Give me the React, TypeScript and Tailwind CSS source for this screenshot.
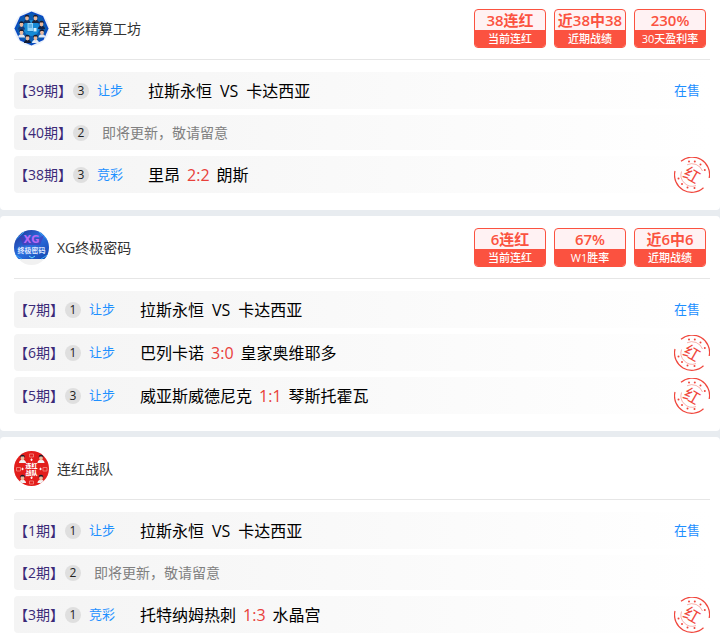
import type { ReactNode } from "react";

interface Badge {
  value: string;
  label: string;
}

interface Match {
  period: number;
  count: number;
  tag?: string;
  home?: string;
  away?: string;
  score?: string;
}

interface Expert {
  name: string;
  avatar: ReactNode;
  badges: Badge[];
  matches: Match[];
}

const Face = ({ x, y, suit }: { x: number; y: number; suit: string }) => (
  <g>
    <path d={`M${x - 3.6} ${y + 5}q.6 -3.2 3.6 -3.2t3.6 3.2z`} fill={suit} />
    <ellipse cx={x} cy={y} rx="1.9" ry="2.4" fill="#e9b99d" />
    <path d={`M${x - 2.2} ${y}q-.4 -3.2 2.2 -3.2t2.2 3.2l-.8 -1.4h-2.800z`} fill="#1b1a2a" />
  </g>
);

const WorkshopAvatar = () => (
  <svg viewBox="0 0 35 35" className="size-[35px] shrink-0 rounded-full" aria-hidden="true">
    <rect width="35" height="35" fill="#eaf2fb" />
    <path d="M17.5 0.5 29 5 34.5 17.5 29.5 29 17.5 34.5 6 29.5 0.5 17.5 6 5.5z" fill="#0a49c4" />
    <path d="M17.5 2 28 6.2 33 17.5 28.3 28 17.5 33 7 28.3 2 17.5 7 6.5z" fill="#0a5bb0" />
    <circle cx="17.5" cy="17" r="8" fill="#168bd6" />
    <Face x={13} y={7} suit="#12305e" />
    <Face x={21.5} y={7} suit="#1a2238" />
    <Face x={27.5} y={13} suit="#102246" />
    <Face x={7.5} y={13.5} suit="#183b78" />
    <Face x={7.5} y={21.5} suit="#dfe8f4" />
    <Face x={28} y={21.5} suit="#dfe8f4" />
    <Face x={13.5} y={27} suit="#101a35" />
    <Face x={21.5} y={27} suit="#e4ecf7" />
    <path d="M13.5 12h5.5v8h-5.500z" fill="#8fd4f8" />
    <path d="M14.5 14h3.5M14.5 16h3.5M13 20.500h9" stroke="#1577c2" strokeWidth=".8" />
    <path d="M19.500 17h3v3.500h-3z" fill="#d8f2ff" />
  </svg>
);

const CodeAvatar = () => (
  <svg viewBox="0 0 35 35" className="size-[35px] shrink-0 rounded-full" aria-hidden="true">
    <defs>
      <linearGradient id="code-bg" x1="0" y1="0" x2="1" y2="1">
        <stop offset="0" stopColor="#1d2f91" />
        <stop offset=".5" stopColor="#2b6fe0" />
        <stop offset="1" stopColor="#1545ae" />
      </linearGradient>
    </defs>
    <rect width="35" height="35" fill="#f1f1f1" />
    <rect width="35" height="29" fill="url(#code-bg)" />
    <path d="M0 11 10 2 7 0M35 11 25 2 28 0M0 24l8 5M35 24l-8 5" stroke="#36a6f4" fill="none" />
    <path d="M5 5l5 3h15l5-3-4 10H9z" fill="#4b34b5" opacity=".6" />
    <path d="M15 26l3 2 3-2" stroke="#69ddff" fill="none" />
    <text x="17.5" y="13" textAnchor="middle" fontSize="10" fontWeight="700" fontFamily="DejaVu Sans, sans-serif" fill="#b56af5">
      XG
    </text>
    <text x="17.5" y="23" textAnchor="middle" fontSize="7" fontWeight="700" fill="#dfe8ff">
      终极密码
    </text>
  </svg>
);

const TeamAvatar = () => (
  <svg viewBox="0 0 35 35" className="size-[35px] shrink-0 rounded-full" aria-hidden="true">
    <rect width="35" height="35" fill="#e21d1b" />
    <g fill="none" stroke="#f58a80" strokeWidth=".8">
      <path d="M15.500 3h4v3h-4zM15.500 30h4v3h-4zM2.500 16.500h4v3.500h-4zM29 16.500h4v3.500h-4z" />
    </g>
    <path
      d="M17.5 7.500v2.500M16.300 8.800h2.500M17.5 25.500v2.500M16.300 26.800h2.500M8.500 16.700v2.500M7.300 18h2.500M26.500 16.700v2.500M25.300 18h2.500"
      stroke="#fff"
      strokeWidth=".9"
    />
    <Face x={8.5} y={7} suit="#f3f3f3" />
    <Face x={27} y={7} suit="#f3f3f3" />
    <Face x={8.5} y={27} suit="#f3f3f3" />
    <Face x={27} y={27} suit="#f3f3f3" />
    <text x="17.5" y="17" textAnchor="middle" fontSize="6" fontWeight="900" fill="#fff">
      连红
    </text>
    <text x="17.5" y="23.5" textAnchor="middle" fontSize="6" fontWeight="900" fill="#fff">
      战队
    </text>
  </svg>
);

const RedStamp = () => (
  <svg viewBox="0 0 36 36" className="size-9 shrink-0" role="img" aria-label="红">
    <g fill="none" stroke="#f0463c">
      <path d="M7 4.300A17.300 17.300 0 0 1 35.200 21" strokeWidth="1.200" />
      <path d="M1 14A17.300 17.300 0 0 0 29.500 30.800" strokeWidth="1.200" />
      <path d="M13 7.800A11.300 11.300 0 0 1 28.500 14M7.500 14.500A11.300 11.300 0 0 0 22 28.600" strokeWidth=".6" opacity=".7" />
    </g>
    <g fill="#f0463c">
      <circle cx="15" cy="4.500" r="1" />
      <circle cx="20.800" cy="4.500" r="1" />
      <circle cx="26.500" cy="7.500" r="1" />
      <circle cx="30.800" cy="13" r="1" />
      <circle cx="4.500" cy="21.500" r="1" />
      <circle cx="8" cy="27" r="1" />
      <circle cx="13.500" cy="30.500" r="1" />
      <circle cx="20.500" cy="31" r="1" />
    </g>
    <text x="18" y="24" textAnchor="middle" fontSize="16" fill="#f0463c" transform="rotate(30 18 18)">
      红
    </text>
  </svg>
);

const experts: Expert[] = [
  {
    name: "足彩精算工坊",
    avatar: <WorkshopAvatar />,
    badges: [
      { value: "38连红", label: "当前连红" },
      { value: "近38中38", label: "近期战绩" },
      { value: "230%", label: "30天盈利率" },
    ],
    matches: [
      { period: 39, count: 3, tag: "让步", home: "拉斯永恒", away: "卡达西亚" },
      { period: 40, count: 2 },
      { period: 38, count: 3, tag: "竞彩", home: "里昂", away: "朗斯", score: "2:2" },
    ],
  },
  {
    name: "XG终极密码",
    avatar: <CodeAvatar />,
    badges: [
      { value: "6连红", label: "当前连红" },
      { value: "67%", label: "W1胜率" },
      { value: "近6中6", label: "近期战绩" },
    ],
    matches: [
      { period: 7, count: 1, tag: "让步", home: "拉斯永恒", away: "卡达西亚" },
      { period: 6, count: 1, tag: "让步", home: "巴列卡诺", away: "皇家奥维耶多", score: "3:0" },
      { period: 5, count: 3, tag: "让步", home: "威亚斯威德尼克", away: "琴斯托霍瓦", score: "1:1" },
    ],
  },
  {
    name: "连红战队",
    avatar: <TeamAvatar />,
    badges: [],
    matches: [
      { period: 1, count: 1, tag: "让步", home: "拉斯永恒", away: "卡达西亚" },
      { period: 2, count: 2 },
      { period: 3, count: 1, tag: "竞彩", home: "托特纳姆热刺", away: "水晶宫", score: "1:3" },
    ],
  },
];

const StatBadge = ({ value, label }: Badge) => (
  <div className="w-[72px] overflow-hidden rounded border border-[#fb5240] bg-[#fff2f3] text-center whitespace-nowrap">
    <div className="h-5 text-[15px] leading-5 font-semibold text-[#fb5240]">{value}</div>
    <div className="h-[17px] bg-[#fb5240] text-[11px] leading-[18px] font-medium text-white">{label}</div>
  </div>
);

const MatchRow = ({ period, count, tag, home, away, score }: Match) => (
  <li
    className={`flex items-center rounded bg-linear-to-r from-[#f4f4f4] to-white ${
      tag ? "h-[37px]" : "h-[35px]"
    }`}
  >
    <span className="text-sm text-[#3b2a78]">【{period}期】</span>
    <span className="ml-px flex size-4 items-center justify-center rounded-full bg-[#dfdfdf] text-xs text-[#222]">
      {count}
    </span>
    {tag ? (
      <>
        <span className="ml-2 text-[13px] text-[#1e90ff]">{tag}</span>
        <span className={`ml-[25px] flex text-base text-black ${score ? "gap-[7px]" : "gap-2"}`}>
          <span>{home}</span>
          {score ? <span className="text-[#e8403a]">{score}</span> : <span>VS</span>}
          <span>{away}</span>
        </span>
        <span className="ml-auto flex items-center">
          {score ? <RedStamp /> : <span className="mr-2.5 text-[13px] text-[#1e90ff]">在售</span>}
        </span>
      </>
    ) : (
      <span className="ml-[13px] text-sm text-[#808080]">即将更新，敬请留意</span>
    )}
  </li>
);

const ExpertCard = ({ name, avatar, badges, matches }: Expert) => (
  <section className="rounded bg-white pt-3 pr-2.5 pb-[17px] pl-3.5 first:rounded-t-none first:pt-[9px]">
    <header className="flex min-h-[51px] items-start justify-between border-b border-[#e6e6e6] pb-[11px]">
      <div className="flex h-[39px] items-center gap-2">
        {avatar}
        <h2 className="text-sm text-[#333]">{name}</h2>
      </div>
      <div className="mr-1 flex gap-2">
        {badges.map((badge) => (
          <StatBadge key={badge.label} {...badge} />
        ))}
      </div>
    </header>
    <ul className="mt-3 flex flex-col gap-1.5">
      {matches.map((match) => (
        <MatchRow key={match.period} {...match} />
      ))}
    </ul>
  </section>
);

export default function App() {
  return (
    <main className="flex min-h-screen flex-col gap-1.5 bg-[#e8ecf0] font-['Open_Sans','Noto_Sans_CJK_SC',sans-serif] [&>section:last-child]:grow">
      {experts.map((expert) => (
        <ExpertCard key={expert.name} {...expert} />
      ))}
    </main>
  );
}
